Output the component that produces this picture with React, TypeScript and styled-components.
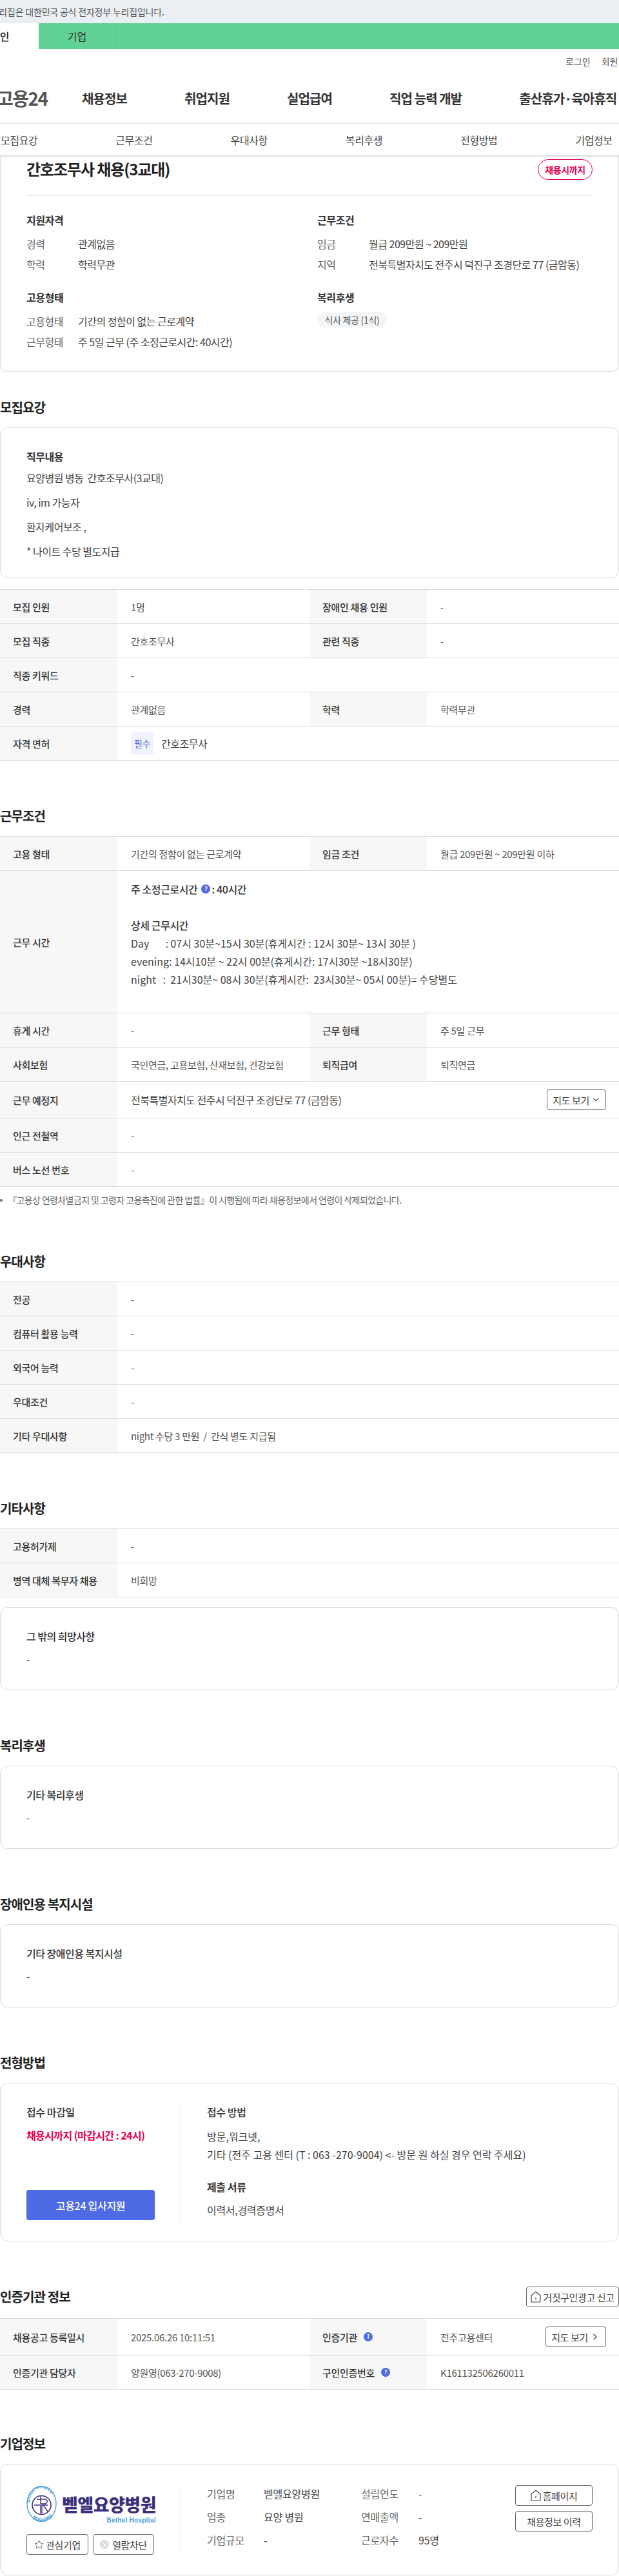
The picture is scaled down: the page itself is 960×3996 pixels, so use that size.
import React from "react";
import styled, { createGlobalStyle } from "styled-components";
import { ChevronDown, ChevronRight, Star } from "lucide-react";

const Global = createGlobalStyle`
  html, body { margin: 0; padding: 0; background: #fff; }
  body { font-family: "Noto Sans CJK KR", "Noto Sans", sans-serif; color: #333; }
  * { box-sizing: border-box; }
`;

const Page = styled.div`
  width: 960px;
  height: 3996px;
  overflow: hidden;
`;

const Notice = styled.div`
  height: 36px;
  background: #ebeff4;
  color: #555;
  font-size: 14px;
  line-height: 36px;
  letter-spacing: -0.2px;
  white-space: nowrap;
  & > span { display: block; margin-left: -30px; }
`;

const GreenBar = styled.div`
  height: 40px;
  background: #60d394;
  display: flex;
  font-size: 16px;
  line-height: 40px;
  white-space: nowrap;
`;

const ActiveTab = styled.div`
  width: 60px;
  background: #fff;
  color: #222;
  font-weight: 500;
  & > span { display: block; margin-left: -15px; }
`;

const OtherTab = styled.div`
  width: 120px;
  text-align: center;
  color: #333;
  border-right: 1px solid #55c487;
`;

const Util = styled.div`
  height: 39px;
  padding: 9px 0 0 877px;
  display: flex;
  gap: 17px;
  font-size: 14px;
  line-height: 20px;
  color: #555;
  white-space: nowrap;
`;

const MainNav = styled.div`
  height: 77px;
  border-bottom: 1px solid #eee;
  display: flex;
  align-items: center;
  padding-bottom: 2px;
  white-space: nowrap;
`;

const Brand = styled.div`
  width: 127px;
  flex: none;
  margin-left: -5px;
  margin-right: 5px;
  font-size: 28px;
  font-weight: 700;
  letter-spacing: -1.5px;
  color: #555;
`;

const Menu = styled.div`
  display: flex;
  gap: 89px;
  font-size: 20px;
  font-weight: 600;
  letter-spacing: -0.9px;
  color: #333;
`;

const Tabs = styled.div`
  position: relative;
  z-index: 2;
  height: 49px;
  background: #fff;
  display: flex;
  gap: 121px;
  align-items: center;
  padding-left: 1px;
  font-size: 16px;
  letter-spacing: -0.4px;
  color: #444;
  white-space: nowrap;
  box-shadow: 0 1px 3px rgba(0, 0, 0, 0.25);
`;

const TopCard = styled.div`
  height: 336px;
  border: 1px solid #ddd;
  border-top: none;
  border-radius: 0 0 12px 12px;
  padding: 6px 40px 0;
`;

const TitleRow = styled.div`
  display: flex;
  justify-content: space-between;
  height: 57px;
  border-bottom: 1px solid #e8e8e8;
`;

const Title = styled.h1`
  margin: 0;
  font-size: 24px;
  line-height: 30px;
  font-weight: 600;
  letter-spacing: -1.1px;
  color: #222;
`;

const DeadlineBadge = styled.div`
  width: 85px;
  height: 32px;
  border: 1px solid #e6004d;
  border-radius: 16px;
  color: #e6004d;
  font-size: 14px;
  font-weight: 700;
  line-height: 30px;
  text-align: center;
  letter-spacing: -0.4px;
`;

const Summary = styled.div`
  display: grid;
  grid-template-columns: 451px 1fr;
  padding-top: 25px;
  row-gap: 23px;
`;

const GroupTitle = styled.h3`
  margin: 0 0 9px;
  font-size: 16px;
  line-height: 24px;
  font-weight: 700;
  letter-spacing: -0.4px;
  color: #333;
`;

const SumRow = styled.div`
  display: flex;
  font-size: 16px;
  line-height: 32px;
  letter-spacing: -0.5px;
  white-space: nowrap;
`;

const SumLabel = styled.span`
  width: 80px;
  flex: none;
  color: #666;
`;

const SumValue = styled.span`
  color: #444;
`;

const Chip = styled.div`
  display: inline-block;
  margin-top: 2px;
  width: 108px;
  height: 24px;
  border-radius: 12px;
  background: #f5f5f5;
  color: #555;
  font-size: 14px;
  line-height: 24px;
  text-align: center;
  letter-spacing: -0.3px;
`;

const Section = styled.section<{ $top?: number }>`
  margin-top: ${(p) => p.$top ?? 70}px;
`;

const HeadRow = styled.div<{ $gap?: number }>`
  display: flex;
  justify-content: space-between;
  align-items: center;
  height: 32px;
  margin-bottom: ${(p) => p.$gap ?? 15}px;
`;

const SectionTitle = styled.h2`
  margin: 0;
  font-size: 20px;
  line-height: 30px;
  font-weight: 600;
  letter-spacing: -0.9px;
  color: #222;
`;

const Card = styled.div<{ $bottom?: number; $top?: number }>`
  border: 1px solid #ddd;
  border-radius: 12px;
  margin-top: ${(p) => p.$top ?? 0}px;
  padding: 32px 40px ${(p) => p.$bottom ?? 36}px;
`;

const CardTitle = styled.div<{ $strong?: boolean }>`
  margin-bottom: ${(p) => (p.$strong ? 2 : 0)}px;
  font-size: 16px;
  line-height: 24px;
  font-weight: ${(p) => (p.$strong ? 600 : 500)};
  letter-spacing: -0.5px;
  color: #333;
`;

const CardDash = styled.div`
  margin-top: 11px;
  font-size: 16px;
  line-height: 24px;
  color: #555;
`;

const Para = styled.p`
  margin: 0;
  font-size: 16px;
  line-height: 38px;
  color: #444;
  letter-spacing: -0.5px;
  white-space: pre;
`;

const Table = styled.div<{ $top?: number }>`
  border-top: 1px solid #ddd;
  margin-top: ${(p) => p.$top ?? 0}px;
`;

const Row = styled.div<{ $h?: number; $wide?: boolean }>`
  display: grid;
  grid-template-columns: ${(p) => (p.$wide ? "182px 1fr" : "182px 298px 182px 298px")};
  height: ${(p) => p.$h ?? 53}px;
  border-bottom: 1px solid #ddd;
`;

const Th = styled.div`
  background: #f7f7f7;
  padding-left: 20px;
  display: flex;
  align-items: center;
  gap: 4px;
  font-size: 15px;
  font-weight: 500;
  letter-spacing: -0.3px;
  color: #333;
  white-space: nowrap;
`;

const Td = styled.div`
  padding: 0 20px 0 21px;
  display: flex;
  align-items: center;
  justify-content: space-between;
  font-size: 15px;
  letter-spacing: -0.3px;
  color: #555;
  white-space: pre;
`;

const Lead = styled.span`
  display: flex;
  align-items: center;
  gap: 12px;
  font-size: 16px;
  letter-spacing: -0.5px;
  color: #444;
`;

const Tag = styled.span`
  width: 35px;
  height: 35px;
  border-radius: 4px;
  background: #f0f2fd;
  color: #4f6ae5;
  font-size: 14px;
  line-height: 35px;
  text-align: center;
`;

const Schedule = styled.div`
  padding: 14px 0 0 21px;
  font-size: 16px;
  line-height: 28px;
  color: #444;
  white-space: pre;
`;

const ScheduleHead = styled.div<{ $gap?: number }>`
  display: flex;
  align-items: center;
  font-weight: 500;
  letter-spacing: -0.4px;
  color: #333;
  margin-bottom: ${(p) => p.$gap ?? 0}px;
`;

const Help = styled.span`
  display: inline-block;
  width: 14px;
  height: 14px;
  margin: 0 2px 0 6px;
  border-radius: 50%;
  background: #4f6ae5;
  color: #fff;
  font-size: 9px;
  font-weight: 700;
  line-height: 14px;
  text-align: center;
  letter-spacing: 0;
`;

const OutlineButton = styled.button<{ $w: number; $h?: number }>`
  flex: none;
  width: ${(p) => p.$w}px;
  height: ${(p) => p.$h ?? 32}px;
  padding: 0;
  border: 1px solid #666;
  border-radius: 4px;
  background: #fff;
  color: #444;
  font-family: inherit;
  font-size: 15px;
  letter-spacing: -0.4px;
  display: flex;
  align-items: center;
  justify-content: center;
  gap: 3px;
  white-space: nowrap;
`;

const Note = styled.div`
  margin: 10px 0 1px;
  font-size: 14px;
  line-height: 20px;
  letter-spacing: -0.6px;
  color: #666;
  white-space: nowrap;
  &::before {
    content: "";
    display: inline-block;
    width: 4px;
    height: 4px;
    border-radius: 50%;
    background: #666;
    margin: 0 8px 3px 0;
  }
`;

const ApplyCard = styled.div`
  height: 246px;
  border: 1px solid #ddd;
  border-radius: 12px;
  padding: 32px 40px;
  display: flex;
`;

const ApplyLeft = styled.div`
  width: 240px;
  height: 180px;
  padding-right: 41px;
  border-right: 1px solid #e8e8e8;
  display: flex;
  flex-direction: column;
  flex: none;
`;

const ApplyRight = styled.div`
  padding-left: 40px;
`;

const BlockTitle = styled.div`
  margin-bottom: 12px;
  font-size: 16px;
  line-height: 24px;
  font-weight: 500;
  letter-spacing: -0.4px;
  color: #333;
`;

const Deadline = styled.div`
  font-size: 16px;
  line-height: 24px;
  font-weight: 600;
  letter-spacing: -0.6px;
  color: #e6004d;
`;

const ApplyButton = styled.button`
  margin-top: auto;
  width: 199px;
  height: 47px;
  border: none;
  border-radius: 4px;
  background: #4f6ae5;
  color: #fff;
  font-family: inherit;
  font-size: 16px;
  font-weight: 500;
  letter-spacing: -0.3px;
`;

const Method = styled.div`
  font-size: 16px;
  line-height: 28px;
  color: #444;
  white-space: nowrap;
`;

const BlockTitleLow = styled(BlockTitle)`
  margin: 24px 0 10px;
  font-weight: 600;
`;

const SingleLine = styled.div`
  font-size: 16px;
  line-height: 28px;
  letter-spacing: -0.3px;
  color: #444;
`;

const CompanyCard = styled.div`
  height: 173px;
  border: 1px solid #ddd;
  border-radius: 12px;
  padding: 32px 40px;
  display: flex;
`;

const CompanyLeft = styled.div`
  width: 240px;
  height: 108px;
  padding-right: 41px;
  border-right: 1px solid #e8e8e8;
  flex: none;
  display: flex;
  flex-direction: column;
  justify-content: space-between;
`;

const Logo = styled.div`
  height: 63px;
  display: flex;
  gap: 8px;
`;

const LogoText = styled.div`
  flex: 1;
  padding-top: 14px;
  text-align: right;
  white-space: nowrap;
`;

const LogoKo = styled.div`
  margin-bottom: 2px;
  font-size: 27px;
  line-height: 32px;
  font-weight: 900;
  letter-spacing: -0.5px;
  color: #3b2f7d;
`;

const LogoEn = styled.div`
  font-family: "Liberation Sans", sans-serif;
  font-size: 10px;
  line-height: 14px;
  font-weight: 700;
  letter-spacing: 0.25px;
  color: #4a9fd8;
`;

const LeftActions = styled.div`
  display: flex;
  justify-content: space-between;
`;

const XDot = styled.span`
  width: 14px;
  height: 14px;
  margin-right: 2px;
  border-radius: 50%;
  background: #ddd;
  color: #fff;
  font-size: 11px;
  line-height: 14px;
  text-align: center;
`;

const Info = styled.div`
  margin-left: 40px;
  padding-top: 1px;
  display: grid;
  grid-template-columns: 88px 151px 89px 110px;
  grid-auto-rows: 24px;
  row-gap: 12px;
  font-size: 16px;
  line-height: 24px;
  letter-spacing: -0.2px;
  white-space: nowrap;
`;

const InfoLabel = styled.span`
  color: #666;
`;

const InfoValue = styled.span`
  color: #444;
`;

const RightActions = styled.div`
  margin-left: auto;
  display: flex;
  flex-direction: column;
  gap: 8px;
`;

const HomeIcon = () => (
  <svg width="16" height="18" viewBox="0 0 16 18" fill="none" stroke="#444" strokeWidth="1.2">
    <path d="M1 7 L8 1 L15 7 V16 Q15 17 14 17 H2 Q1 17 1 16 Z" strokeLinejoin="round" />
    <path d="M8 10 V13" />
  </svg>
);

const Emblem = () => (
  <svg width="47" height="63" viewBox="0 0 47 63" fill="none" style={{ flex: "none" }}>
    <defs>
      <path id="arcTop" d="M5 27 A18.5 22 0 0 1 42 27" />
      <path id="arcBot" d="M6 48 Q23.5 66 41 48" />
    </defs>
    <ellipse cx="23.5" cy="29" rx="22.5" ry="27" stroke="#4a9fd8" strokeWidth="1.4" />
    <text fontFamily="Liberation Sans, sans-serif" fontSize="6.5" fontWeight="700" fill="#4a9fd8" letterSpacing="0.2">
      <textPath href="#arcTop">Bethel Hospital</textPath>
    </text>
    <text fontFamily="Noto Sans CJK KR, sans-serif" fontSize="6.5" fontWeight="700" fill="#4a9fd8">
      <textPath href="#arcBot" startOffset="4">벧엘요양병원</textPath>
    </text>
    <circle cx="23.5" cy="31" r="14.5" stroke="#3b2f7d" strokeWidth="1.6" />
    <path d="M12 31 H22 V44 M24 44 V31 H33 M16 22 H30 Q35 26 29 29 H22 M22 17 V29 M26 31 L34 42" stroke="#3b2f7d" strokeWidth="1.4" />
  </svg>
);

const Two = ({ a, b, c, d }: { a: string; b: React.ReactNode; c: React.ReactNode; d: React.ReactNode }) => (
  <Row>
    <Th>{a}</Th>
    <Td>{b}</Td>
    <Th>{c}</Th>
    <Td>{d}</Td>
  </Row>
);

const One = ({ a, b, h }: { a: string; b: React.ReactNode; h?: number }) => (
  <Row $wide $h={h}>
    <Th>{a}</Th>
    <Td>{b}</Td>
  </Row>
);

const TextCard = ({ title, top }: { title: string; top?: number }) => (
  <Card $top={top}>
    <CardTitle>{title}</CardTitle>
    <CardDash>-</CardDash>
  </Card>
);

export default function App() {
  return (
    <Page>
      <Global />
      <Notice><span>이 누리집은 대한민국 공식 전자정부 누리집입니다.</span></Notice>
      <GreenBar>
        <ActiveTab><span>개인</span></ActiveTab>
        <OtherTab>기업</OtherTab>
      </GreenBar>
      <Util>
        <span>로그인</span>
        <span>회원가입</span>
      </Util>
      <MainNav>
        <Brand>고용24</Brand>
        <Menu>
          <span>채용정보</span>
          <span>취업지원</span>
          <span>실업급여</span>
          <span>직업 능력 개발</span>
          <span>출산휴가·육아휴직</span>
        </Menu>
      </MainNav>
      <Tabs>
        <span>모집요강</span>
        <span>근무조건</span>
        <span>우대사항</span>
        <span>복리후생</span>
        <span>전형방법</span>
        <span>기업정보</span>
      </Tabs>

      <TopCard>
        <TitleRow>
          <Title>간호조무사 채용(3교대)</Title>
          <DeadlineBadge>채용시까지</DeadlineBadge>
        </TitleRow>
        <Summary>
          <div>
            <GroupTitle>지원자격</GroupTitle>
            <SumRow><SumLabel>경력</SumLabel><SumValue>관계없음</SumValue></SumRow>
            <SumRow><SumLabel>학력</SumLabel><SumValue>학력무관</SumValue></SumRow>
          </div>
          <div>
            <GroupTitle>근무조건</GroupTitle>
            <SumRow><SumLabel>임금</SumLabel><SumValue>월급 209만원 ~ 209만원</SumValue></SumRow>
            <SumRow><SumLabel>지역</SumLabel><SumValue>전북특별자치도 전주시 덕진구 조경단로 77 (금암동)</SumValue></SumRow>
          </div>
          <div>
            <GroupTitle>고용형태</GroupTitle>
            <SumRow><SumLabel>고용형태</SumLabel><SumValue>기간의 정함이 없는 근로계약</SumValue></SumRow>
            <SumRow><SumLabel>근무형태</SumLabel><SumValue>주 5일 근무 (주 소정근로시간: 40시간)</SumValue></SumRow>
          </div>
          <div>
            <GroupTitle>복리후생</GroupTitle>
            <Chip>식사 제공 (1식)</Chip>
          </div>
        </Summary>
      </TopCard>

      <Section $top={39}>
        <HeadRow><SectionTitle>모집요강</SectionTitle></HeadRow>
        <Card $bottom={22}>
          <CardTitle $strong>직무내용</CardTitle>
          <Para>요양병원 병동  간호조무사(3교대)</Para>
          <Para>iv, im 가능자</Para>
          <Para>환자케어보조 ,</Para>
          <Para>* 나이트 수당 별도지급</Para>
        </Card>
        <Table $top={17}>
          <Two a="모집 인원" b="1명" c="장애인 채용 인원" d="-" />
          <Two a="모집 직종" b="간호조무사" c="관련 직종" d="-" />
          <One a="직종 키워드" b="-" />
          <Two a="경력" b="관계없음" c="학력" d="학력무관" />
          <One a="자격 면허" b={<Lead><Tag>필수</Tag>간호조무사</Lead>} />
        </Table>
      </Section>

      <Section>
        <HeadRow><SectionTitle>근무조건</SectionTitle></HeadRow>
        <Table>
          <Two a="고용 형태" b="기간의 정함이 없는 근로계약" c="임금 조건" d="월급 209만원 ~ 209만원 이하" />
          <Row $wide $h={221}>
            <Th>근무 시간</Th>
            <Schedule>
              <ScheduleHead $gap={28}>주 소정근로시간<Help>?</Help>: 40시간</ScheduleHead>
              <ScheduleHead>상세 근무시간</ScheduleHead>
              <div>{"Day       : 07시 30분~15시 30분(휴게시간 : 12시 30분~ 13시 30분 )"}</div>
              <div>{"evening: 14시10분 ~ 22시 00분(휴게시간: 17시30분 ~18시30분)"}</div>
              <div>{"night   :  21시30분~ 08시 30분(휴게시간:  23시30분~ 05시 00분)= 수당별도"}</div>
            </Schedule>
          </Row>
          <Two a="휴게 시간" b="-" c="근무 형태" d="주 5일 근무" />
          <Two a="사회보험" b="국민연금, 고용보험, 산재보험, 건강보험" c="퇴직급여" d="퇴직연금" />
          <One
            a="근무 예정지"
            h={57}
            b={
              <>
                <Lead>전북특별자치도 전주시 덕진구 조경단로 77 (금암동)</Lead>
                <OutlineButton $w={92}>지도 보기<ChevronDown size={14} /></OutlineButton>
              </>
            }
          />
          <One a="인근 전철역" b="-" />
          <One a="버스 노선 번호" b="-" />
        </Table>
        <Note>『고용상 연령차별금지 및 고령자 고용촉진에 관한 법률』이 시행됨에 따라 채용정보에서 연령이 삭제되었습니다.</Note>
      </Section>

      <Section>
        <HeadRow><SectionTitle>우대사항</SectionTitle></HeadRow>
        <Table>
          <One a="전공" b="-" />
          <One a="컴퓨터 활용 능력" b="-" />
          <One a="외국어 능력" b="-" />
          <One a="우대조건" b="-" />
          <One a="기타 우대사항" b="night 수당 3 만원  /  간식 별도 지급됨" />
        </Table>
      </Section>

      <Section>
        <HeadRow><SectionTitle>기타사항</SectionTitle></HeadRow>
        <Table>
          <One a="고용허가제" b="-" />
          <One a="병역 대체 복무자 채용" b="비희망" />
        </Table>
        <TextCard title="그 밖의 희망사항" top={15} />
      </Section>

      <Section>
        <HeadRow><SectionTitle>복리후생</SectionTitle></HeadRow>
        <TextCard title="기타 복리후생" />
      </Section>

      <Section>
        <HeadRow><SectionTitle>장애인용 복지시설</SectionTitle></HeadRow>
        <TextCard title="기타 장애인용 복지시설" />
      </Section>

      <Section>
        <HeadRow><SectionTitle>전형방법</SectionTitle></HeadRow>
        <ApplyCard>
          <ApplyLeft>
            <BlockTitle>접수 마감일</BlockTitle>
            <Deadline>채용시까지 (마감시간 : 24시)</Deadline>
            <ApplyButton>고용24 입사지원</ApplyButton>
          </ApplyLeft>
          <ApplyRight>
            <BlockTitle>접수 방법</BlockTitle>
            <Method>방문,워크넷,</Method>
            <Method>기타 (전주 고용 센터 (T : 063 -270-9004) &lt;- 방문 원 하실 경우 연락 주세요)</Method>
            <BlockTitleLow>제출 서류</BlockTitleLow>
            <SingleLine>이력서,경력증명서</SingleLine>
          </ApplyRight>
        </ApplyCard>
      </Section>

      <Section>
        <HeadRow $gap={17}>
          <SectionTitle>인증기관 정보</SectionTitle>
          <OutlineButton $w={144}><HomeIcon />거짓구인광고 신고</OutlineButton>
        </HeadRow>
        <Table>
          <Row $h={57}>
            <Th>채용공고 등록일시</Th>
            <Td>2025.06.26 10:11:51</Td>
            <Th>인증기관<Help>?</Help></Th>
            <Td>전주고용센터<OutlineButton $w={94}>지도 보기<ChevronRight size={16} /></OutlineButton></Td>
          </Row>
          <Two a="인증기관 담당자" b="양원영(063-270-9008)" c={<>구인인증번호<Help>?</Help></>} d="K161132506260011" />
        </Table>
      </Section>

      <Section $top={68}>
        <HeadRow><SectionTitle>기업정보</SectionTitle></HeadRow>
        <CompanyCard>
          <CompanyLeft>
            <Logo>
              <Emblem />
              <LogoText>
                <LogoKo>벧엘요양병원</LogoKo>
                <LogoEn>Bethel Hospital</LogoEn>
              </LogoText>
            </Logo>
            <LeftActions>
              <OutlineButton $w={96}><Star size={15} strokeWidth={1.3} />관심기업</OutlineButton>
              <OutlineButton $w={95}><XDot>×</XDot>열람차단</OutlineButton>
            </LeftActions>
          </CompanyLeft>
          <Info>
            <InfoLabel>기업명</InfoLabel><InfoValue>벧엘요양병원</InfoValue>
            <InfoLabel>설립연도</InfoLabel><InfoValue>-</InfoValue>
            <InfoLabel>업종</InfoLabel><InfoValue>요양 병원</InfoValue>
            <InfoLabel>연매출액</InfoLabel><InfoValue>-</InfoValue>
            <InfoLabel>기업규모</InfoLabel><InfoValue>-</InfoValue>
            <InfoLabel>근로자수</InfoLabel><InfoValue>95명</InfoValue>
          </Info>
          <RightActions>
            <OutlineButton $w={120}><HomeIcon />홈페이지</OutlineButton>
            <OutlineButton $w={120}>채용정보 이력</OutlineButton>
          </RightActions>
        </CompanyCard>
      </Section>
    </Page>
  );
}
